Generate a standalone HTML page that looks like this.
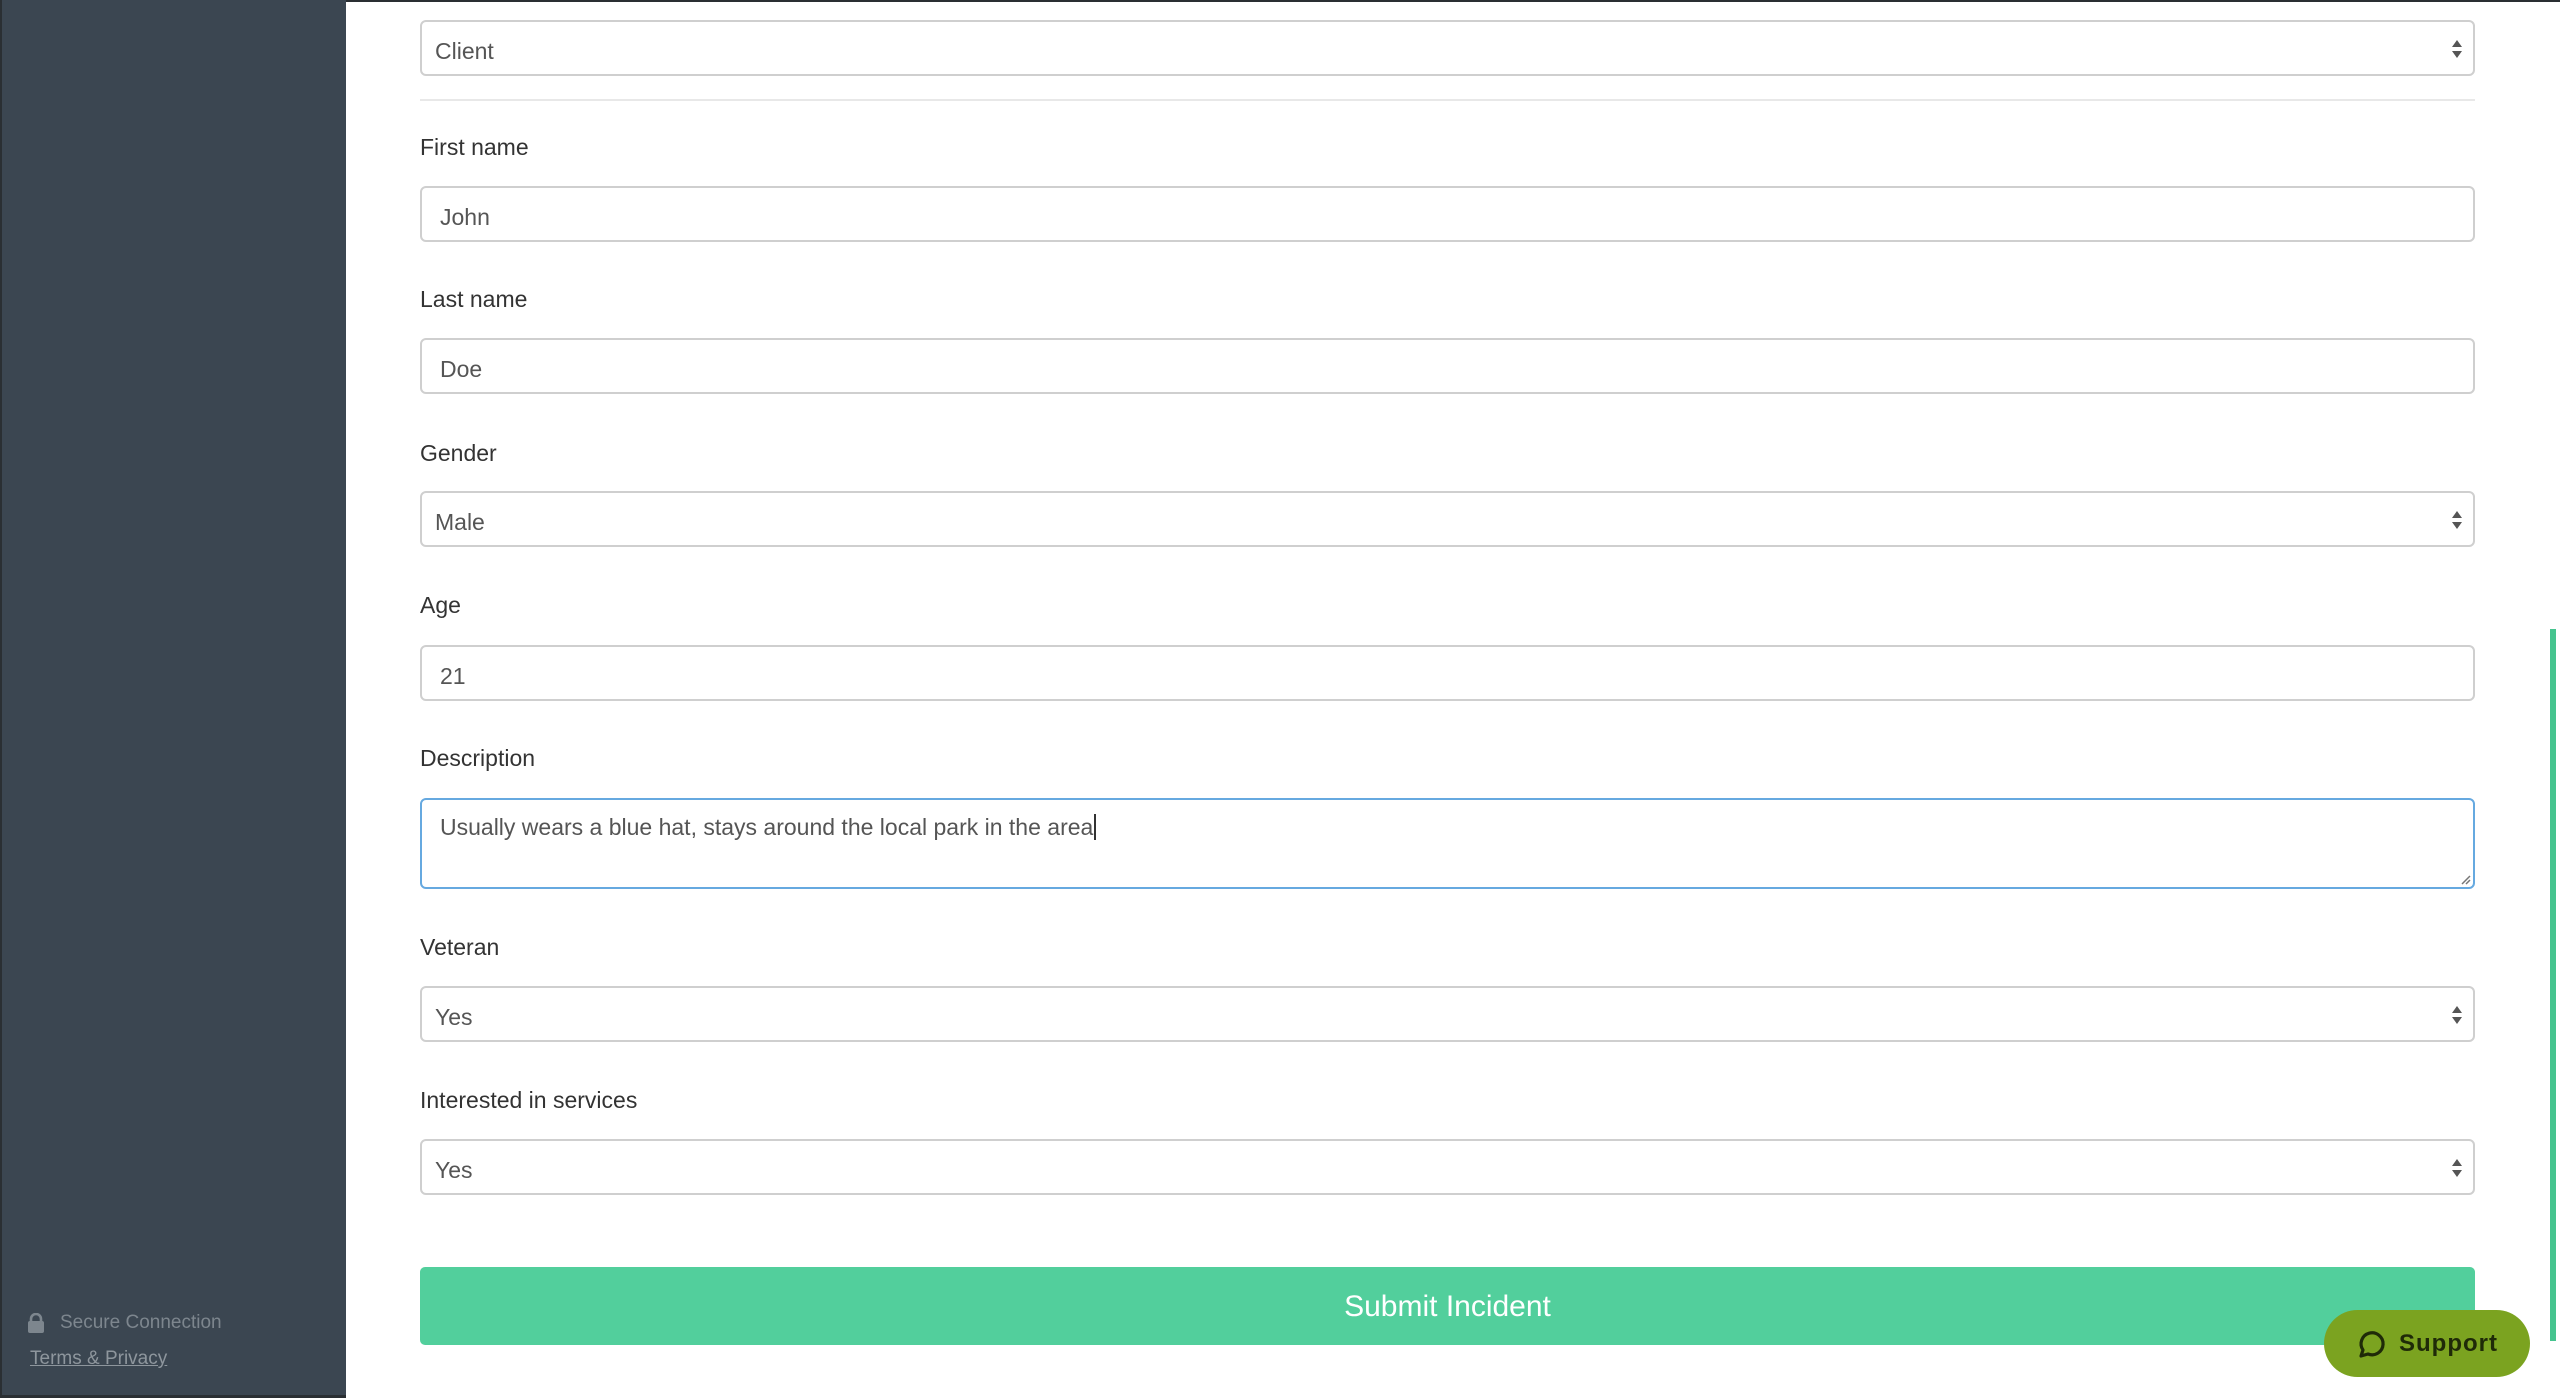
<!DOCTYPE html>
<html><head><meta charset="utf-8"><style>
*{box-sizing:border-box;margin:0;padding:0}
html,body{width:2560px;height:1398px;overflow:hidden;background:#fff;font-family:"Liberation Sans",sans-serif}
.top{position:absolute;left:0;top:0;width:2560px;height:2px;background:#2a2f33}
.side{position:absolute;left:0;top:0;width:346px;height:1398px;background:#3b4651;border-left:2px solid #2a2f33;border-bottom:3px solid #2a2f33}
.t{white-space:nowrap}
.lbl{position:absolute;left:420px;font-size:23px;color:#333;line-height:30px;margin-top:2px}
.f{position:absolute;left:420px;width:2055px;height:56px;border:2px solid #cfcfcf;border-radius:6px;background:#fff;font-size:23px;color:#555;line-height:52px;padding-top:3px;padding-left:18px}
.f.sel{padding-left:13px}
.arr{position:absolute;right:10px;top:17px;width:12px;height:20px}
.hr{position:absolute;left:420px;top:99px;width:2055px;height:2px;background:#e8e8e8}
</style></head><body>
<div class="top"></div>
<div class="side">
 <svg style="position:absolute;left:26px;top:1313px" width="16" height="20" viewBox="0 0 16 20"><path d="M3 9V6a5 5 0 0 1 10 0v3" stroke="#7d868e" stroke-width="2.6" fill="none"/><rect x="0" y="8" width="16" height="12" rx="2" fill="#7d868e"/></svg>
 <div style="position:absolute;left:58px;top:1312px;font-size:19px;color:#7d868e">Secure Connection</div>
 <div style="position:absolute;left:28px;top:1348px;font-size:19px;color:#8e969d;text-decoration:underline">Terms &amp; Privacy</div>
</div>

<div class="f sel" style="top:20px"><span class="t">Client</span><svg class="arr" viewBox="0 0 12 20"><path d="M6 1L11 8H1z M6 19L11 12H1z" fill="#555"/></svg></div>
<div class="hr"></div>
<div class="lbl" style="top:130px">First name</div>
<div class="f" style="top:186px">John</div>
<div class="lbl" style="top:282px">Last name</div>
<div class="f" style="top:338px">Doe</div>
<div class="lbl" style="top:436px">Gender</div>
<div class="f sel" style="top:491px">Male<svg class="arr" viewBox="0 0 12 20"><path d="M6 1L11 8H1z M6 19L11 12H1z" fill="#555"/></svg></div>
<div class="lbl" style="top:588px">Age</div>
<div class="f" style="top:645px">21</div>
<div class="lbl" style="top:741px">Description</div>
<div class="f" style="top:798px;height:91px;border-color:#66a9e0;line-height:1;padding-top:16px"><span class="t">Usually wears a blue hat, stays around the local park in the area<span style="border-right:2px solid #333;margin-left:1px"></span></span><svg style="position:absolute;right:2px;bottom:2px" width="12" height="12" viewBox="0 0 12 12"><path d="M11 3L3 11M11 7L7 11" stroke="#777" stroke-width="1.5"/></svg></div>
<div class="lbl" style="top:930px">Veteran</div>
<div class="f sel" style="top:986px">Yes<svg class="arr" viewBox="0 0 12 20"><path d="M6 1L11 8H1z M6 19L11 12H1z" fill="#555"/></svg></div>
<div class="lbl" style="top:1083px">Interested in services</div>
<div class="f sel" style="top:1139px">Yes<svg class="arr" viewBox="0 0 12 20"><path d="M6 1L11 8H1z M6 19L11 12H1z" fill="#555"/></svg></div>

<div style="position:absolute;left:420px;top:1267px;width:2055px;height:78px;background:#52cf9c;border-radius:5px;color:#fff;font-size:30px;text-align:center;line-height:80px">Submit Incident</div>

<div style="position:absolute;left:2550px;top:629px;width:6px;height:712px;background:#45c48f"></div>

<div style="position:absolute;left:2324px;top:1310px;width:206px;height:67px;border-radius:34px;background:#7ba320;color:#1f2a08;font-weight:bold;font-size:24px;line-height:67px;letter-spacing:1px">
 <svg style="position:absolute;left:31px;top:19px" width="30" height="30" viewBox="0 0 30 30"><path d="M6 27 L8 21 A11 11 0 1 1 13 25 Z" fill="none" stroke="#1f2a08" stroke-width="3.2" stroke-linejoin="round"/></svg>
 <span style="position:absolute;left:75px">Support</span>
</div>
</body></html>
